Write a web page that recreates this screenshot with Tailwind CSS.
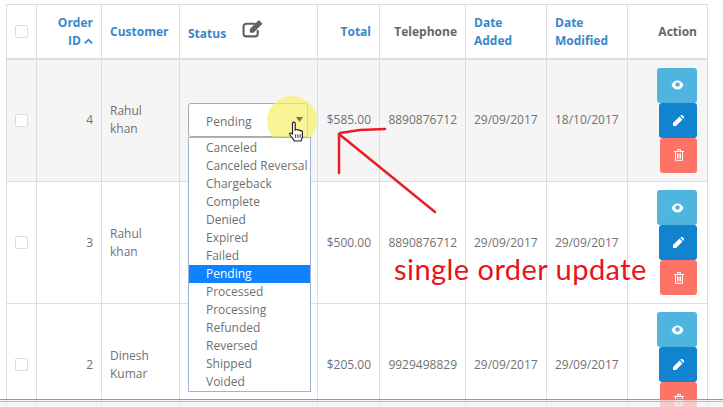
<!DOCTYPE html>
<html lang="en">
<head>
<meta charset="utf-8">
<title>Order list</title>
<script src="https://cdn.jsdelivr.net/npm/@tailwindcss/browser@4"></script>
</head>
<body class="relative h-[407px] w-[723px] overflow-hidden bg-white font-['Open_Sans',sans-serif] text-[12px] leading-[18px] text-[#717171]">

<div class="pl-[6px] pt-[4px]">
<table class="w-[701px] table-fixed border-collapse">
  <colgroup>
    <col class="w-[30px]"><col class="w-[65px]"><col class="w-[78px]"><col class="w-[138px]"><col class="w-[62px]"><col class="w-[86px]"><col class="w-[81px]"><col class="w-[81px]"><col class="w-[80px]">
  </colgroup>
  <thead>
    <tr class="h-[54px] border-b-2 border-[#ddd] font-bold">
      <td class="border border-[#ddd] px-[8px]"><span class="block h-[13px] w-[13px] rounded-[2px] border border-[#ddd] bg-white"></span></td>
      <td class="border border-[#ddd] px-[8px] pt-[2px] text-right text-[#3a87c8]">Order<br>ID <svg class="inline h-[8px] w-[9px] align-[0px]" viewBox="0 0 10 8"><path d="M1 6.500 5 2.500 9 6.500" fill="none" stroke="#3a87c8" stroke-width="2"/></svg></td>
      <td class="border border-[#ddd] px-[8px] pt-[2px] text-[#3a87c8]">Customer</td>
      <td class="border border-[#ddd] px-[8px] pt-[2px] text-[#3a87c8]">
        <div class="flex items-center gap-[16px]">
          <span class="pt-[4px]">Status</span>
          <svg class="mb-[7px] h-[19px] w-[22px]" viewBox="0 0 21 18" fill="none">
            <path d="M13 4.500H4A2.500 2.500 0 0 0 1.500 7v7A2.500 2.500 0 0 0 4 16.500h8.500A2.500 2.500 0 0 0 15 14v-3.500" stroke="#606060" stroke-width="2"/>
            <path d="M7.500 9.500 16 1l3.500 3.500L11 13H7.500z" fill="#606060"/>
          </svg>
        </div>
      </td>
      <td class="border border-[#ddd] px-[8px] pt-[2px] text-right text-[#3a87c8]">Total</td>
      <td class="border border-[#ddd] px-[8px] pt-[2px] text-right text-[#666]">Telephone</td>
      <td class="border border-[#ddd] px-[8px] pt-[2px] text-[#3a87c8]">Date<br>Added</td>
      <td class="border border-[#ddd] px-[8px] pt-[2px] text-[#3a87c8]">Date<br>Modified</td>
      <td class="border border-[#ddd] px-[10px] pt-[2px] text-right text-[#666]">Action</td>
    </tr>
  </thead>
  <tbody>
    <tr class="h-[123px] bg-[#f5f5f5]">
      <td class="border border-[#ddd] px-[8px]"><span class="block h-[13px] w-[13px] rounded-[2px] border border-[#ddd] bg-white"></span></td>
      <td class="border border-[#ddd] px-[8px] text-right">4</td>
      <td class="border border-[#ddd] px-[8px]">Rahul<br>khan</td>
      <td class="border border-[#ddd] px-[8px]">
        <div class="relative">
          <div class="h-[34px] w-[120px] rounded-[3px] border border-[#aaa] bg-white pl-[17px] leading-[35px]">Pending</div>
          <ul class="absolute left-0 top-[34px] z-10 h-[255px] w-[123px] border border-[#9db4d6] bg-white pt-px leading-[18px]">
            <li class="pl-[17px]">Canceled</li>
            <li class="whitespace-nowrap pl-[17px]">Canceled Reversal</li>
            <li class="pl-[17px]">Chargeback</li>
            <li class="pl-[17px]">Complete</li>
            <li class="pl-[17px]">Denied</li>
            <li class="pl-[17px]">Expired</li>
            <li class="pl-[17px]">Failed</li>
            <li class="bg-[#0f83ff] pl-[17px] text-white">Pending</li>
            <li class="pl-[17px]">Processed</li>
            <li class="pl-[17px]">Processing</li>
            <li class="pl-[17px]">Refunded</li>
            <li class="pl-[17px]">Reversed</li>
            <li class="pl-[17px]">Shipped</li>
            <li class="pl-[17px]">Voided</li>
          </ul>
          <span class="absolute left-[79px] top-[-7px] h-[50px] w-[50px] rounded-full bg-[#f7f06a]/70"></span>
          <svg class="absolute left-[108px] top-[14px] h-[5px] w-[7px]" viewBox="0 0 7 5"><path d="M0 0h7L3.500 5z" fill="#7d7a3a"/></svg>
          <svg class="absolute left-[100px] top-[18px] z-20 h-[22px] w-[18px]" viewBox="0 0 20 24">
            <path d="M5 2.500a1.500 1.500 0 0 1 3 0V10l1-.5c1-.5 2 0 2.300.5 1-.5 2 0 2.200.7 1-.4 2.500 0 2.500 1.300v5c0 2.500-1 3-1.500 5H7c-.5-2-3-4-5-7-.7-1.200.5-2.500 2-1.500l1 1z" fill="#fff" stroke="#222" stroke-width="1.300" stroke-linejoin="round"/>
            <path d="M8.500 14.500v4M11 14.500v4M13.500 14.500v4" stroke="#222" stroke-width="1"/>
          </svg>
        </div>
      </td>
      <td class="border border-[#ddd] px-[8px] text-right">$585.00</td>
      <td class="border border-[#ddd] px-[8px] text-right">8890876712</td>
      <td class="border border-[#ddd] px-[8px]">29/09/2017</td>
      <td class="border border-[#ddd] px-[8px]">18/10/2017</td>
      <td class="border border-[#ddd] px-[10px]">
        <div class="flex flex-col items-end">
          <span class="flex h-[35px] w-[40px] items-center justify-center rounded-[3px] bg-[#4fb5de]"><svg class="h-[10px] w-[13px]" viewBox="0 0 13 10"><path d="M.5 5C2 2 4 .500 6.500.500S11 2 12.500 5C11 8 9 9.500 6.500 9.500S2 8 .5 5z" fill="#fff"/><circle cx="6.500" cy="4.500" r="2.300" fill="#4fb5de"/></svg></span>
          <span class="flex h-[35px] w-[38px] items-center justify-center rounded-[3px] bg-[#1283ce]"><svg class="h-[11px] w-[11px]" viewBox="0 0 11 11"><path d="M0 11V8l6.500-6.500 3 3L3 11zM7.300.700 8 0c.4-.3 1-.3 1.400 0l1.600 1.600c.3.400.3 1 0 1.400l-.7.700z" fill="#fff"/></svg></span>
          <span class="flex h-[35px] w-[37px] items-center justify-center rounded-[3px] bg-[#fd7365]"><svg class="h-[12px] w-[10px]" viewBox="0 0 10 12" fill="none"><path d="M0 2.500h10M3.500 2V.7h3V2M1.500 2.500v8.800h7V2.500M3.500 4.500v5M5 4.500v5M6.500 4.500v5" stroke="#fff" stroke-width="1"/></svg></span>
        </div>
      </td>
    </tr>
    <tr class="h-[122px]">
      <td class="border border-[#ddd] px-[8px]"><span class="block h-[13px] w-[13px] rounded-[2px] border border-[#ddd] bg-white"></span></td>
      <td class="border border-[#ddd] px-[8px] text-right">3</td>
      <td class="border border-[#ddd] px-[8px]">Rahul<br>khan</td>
      <td class="border border-[#ddd] px-[8px]"></td>
      <td class="border border-[#ddd] px-[8px] text-right">$500.00</td>
      <td class="border border-[#ddd] px-[8px] text-right">8890876712</td>
      <td class="border border-[#ddd] px-[8px]">29/09/2017</td>
      <td class="border border-[#ddd] px-[8px]">29/09/2017</td>
      <td class="border border-[#ddd] px-[10px]">
        <div class="flex flex-col items-end">
          <span class="flex h-[35px] w-[40px] items-center justify-center rounded-[3px] bg-[#4fb5de]"><svg class="h-[10px] w-[13px]" viewBox="0 0 13 10"><path d="M.5 5C2 2 4 .500 6.500.500S11 2 12.500 5C11 8 9 9.500 6.500 9.500S2 8 .5 5z" fill="#fff"/><circle cx="6.500" cy="4.500" r="2.300" fill="#4fb5de"/></svg></span>
          <span class="flex h-[35px] w-[38px] items-center justify-center rounded-[3px] bg-[#1283ce]"><svg class="h-[11px] w-[11px]" viewBox="0 0 11 11"><path d="M0 11V8l6.500-6.500 3 3L3 11zM7.300.700 8 0c.4-.3 1-.3 1.400 0l1.600 1.600c.3.400.3 1 0 1.400l-.7.700z" fill="#fff"/></svg></span>
          <span class="flex h-[35px] w-[37px] items-center justify-center rounded-[3px] bg-[#fd7365]"><svg class="h-[12px] w-[10px]" viewBox="0 0 10 12" fill="none"><path d="M0 2.500h10M3.500 2V.7h3V2M1.500 2.500v8.800h7V2.500M3.500 4.500v5M5 4.500v5M6.500 4.500v5" stroke="#fff" stroke-width="1"/></svg></span>
        </div>
      </td>
    </tr>
    <tr class="h-[122px]">
      <td class="border border-[#ddd] px-[8px]"><span class="block h-[13px] w-[13px] rounded-[2px] border border-[#ddd] bg-white"></span></td>
      <td class="border border-[#ddd] px-[8px] text-right">2</td>
      <td class="border border-[#ddd] px-[8px]">Dinesh<br>Kumar</td>
      <td class="border border-[#ddd] px-[8px]"></td>
      <td class="border border-[#ddd] px-[8px] text-right">$205.00</td>
      <td class="border border-[#ddd] px-[8px] text-right">9929498829</td>
      <td class="border border-[#ddd] px-[8px]">29/09/2017</td>
      <td class="border border-[#ddd] px-[8px]">29/09/2017</td>
      <td class="border border-[#ddd] px-[10px]">
        <div class="flex flex-col items-end">
          <span class="flex h-[35px] w-[40px] items-center justify-center rounded-[3px] bg-[#4fb5de]"><svg class="h-[10px] w-[13px]" viewBox="0 0 13 10"><path d="M.5 5C2 2 4 .500 6.500.500S11 2 12.500 5C11 8 9 9.500 6.500 9.500S2 8 .5 5z" fill="#fff"/><circle cx="6.500" cy="4.500" r="2.300" fill="#4fb5de"/></svg></span>
          <span class="flex h-[35px] w-[38px] items-center justify-center rounded-[3px] bg-[#1283ce]"><svg class="h-[11px] w-[11px]" viewBox="0 0 11 11"><path d="M0 11V8l6.500-6.500 3 3L3 11zM7.300.700 8 0c.4-.3 1-.3 1.400 0l1.600 1.600c.3.400.3 1 0 1.400l-.7.700z" fill="#fff"/></svg></span>
          <span class="flex h-[35px] w-[37px] items-center justify-center rounded-[3px] bg-[#fd7365]"><svg class="h-[12px] w-[10px]" viewBox="0 0 10 12" fill="none"><path d="M0 2.500h10M3.500 2V.7h3V2M1.500 2.500v8.800h7V2.500M3.500 4.500v5M5 4.500v5M6.500 4.500v5" stroke="#fff" stroke-width="1"/></svg></span>
        </div>
      </td>
    </tr>
  </tbody>
</table>
</div>

<!-- red hand-drawn arrow over the table -->
<svg class="absolute left-0 top-0 z-30 h-[407px] w-[723px]" viewBox="0 0 723 407" fill="none">
  <path d="M385 129 360 130 340 133M339 134V173M339 134 435 212" stroke="#ed1c24" stroke-width="2.500" stroke-linecap="round" stroke-linejoin="round"/>
</svg>
<span class="absolute left-[394px] top-[251px] z-30 whitespace-nowrap font-['Lato',sans-serif] text-[29px] leading-[36px] tracking-[0.45px] text-[#e8141c]">single order update</span>

<!-- window edge at the bottom -->
<div class="absolute bottom-0 left-0 z-30 h-[8px] w-full border-t border-[#999] bg-[#f2f2f2]/70 pt-px"><div class="h-px bg-[#bbb]"></div></div>

</body>
</html>
